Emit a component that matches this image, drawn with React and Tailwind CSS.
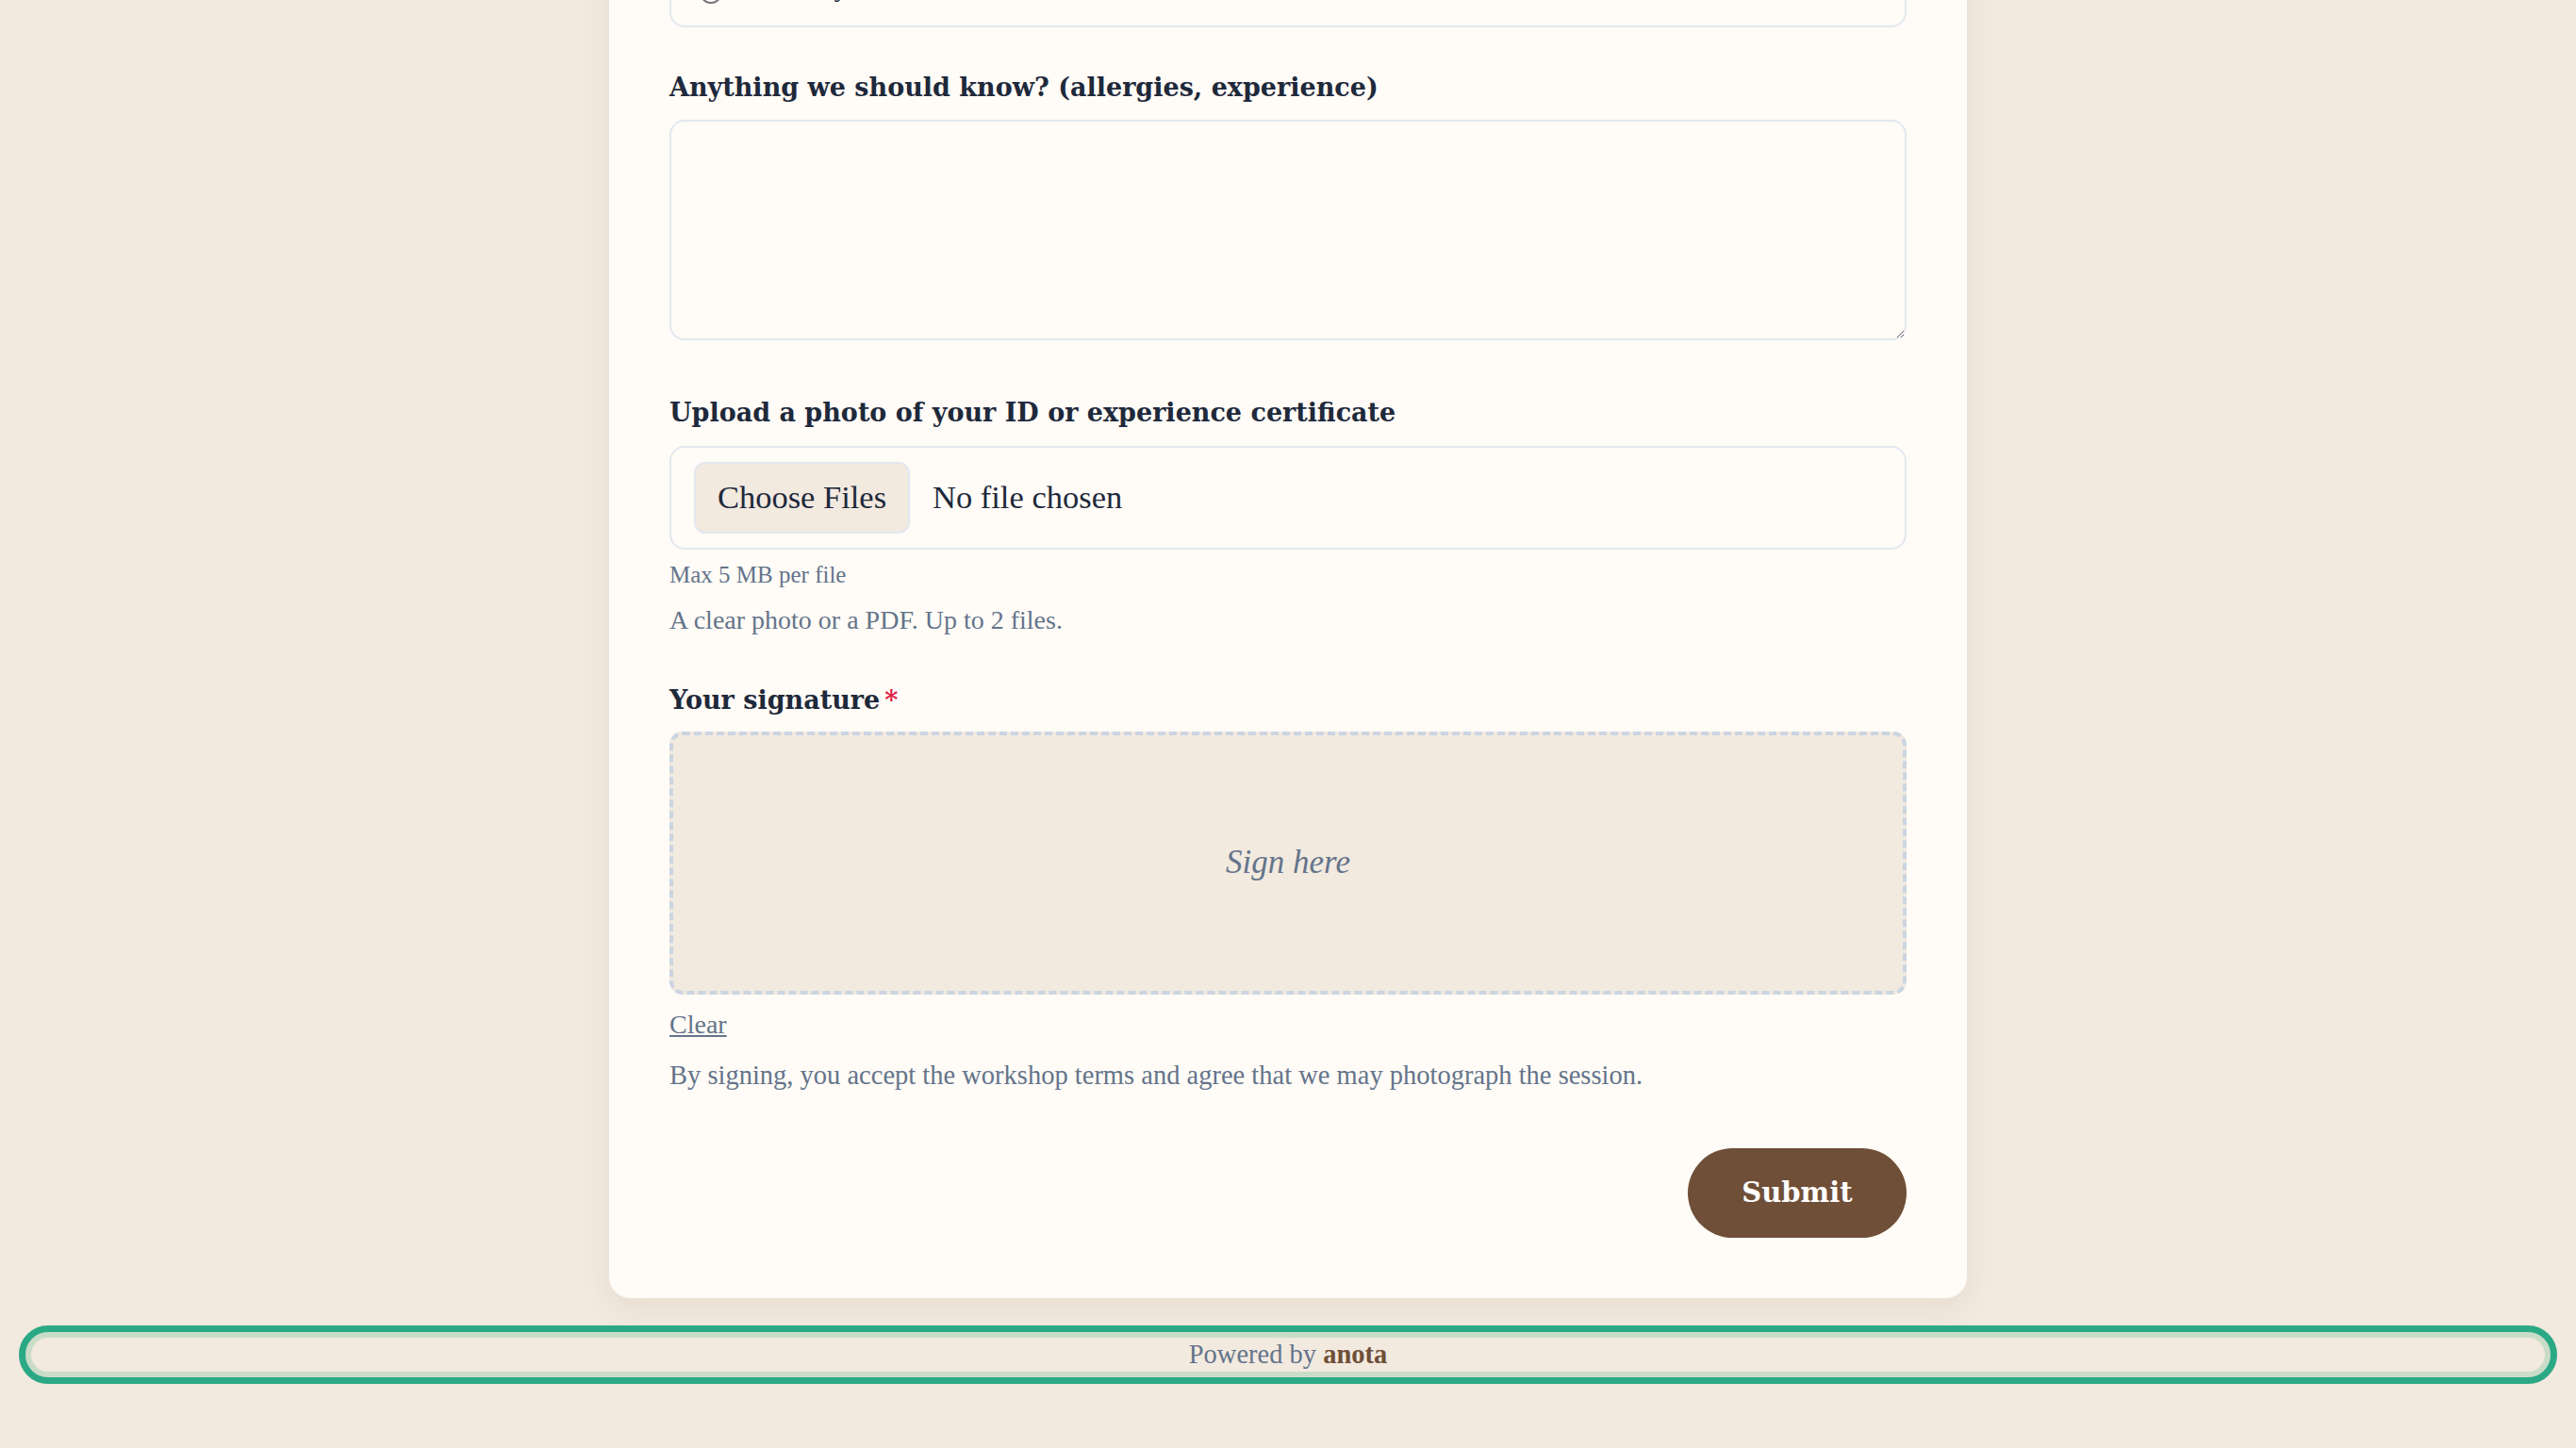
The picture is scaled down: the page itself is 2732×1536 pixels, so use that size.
import React from 'react';

const serif = "font-['Liberation_Serif',serif]";
const bold = "font-['DejaVu_Serif',serif] font-bold";

const Label = ({ children, required, className = '' }) => (
  <div className={`${bold} text-[27px] leading-[40px] text-[#1e293b] ${className}`}>
    {children}
    {required && <span className="ml-[5px] text-[#e11d48]">*</span>}
  </div>
);

const Radio = ({ text }) => (
  <div className="flex h-[36px] items-start gap-[20px]">
    <span className="mt-[6px] h-[24px] w-[24px] shrink-0 rounded-full border-2 border-[#767676] bg-white" />
    <span className={`${serif} text-[28px] leading-[26px] text-[#1e293b]`}>{text}</span>
  </div>
);

export default function App() {
  return (
    <div className={`min-h-screen overflow-hidden bg-[#f2e9df] ${serif}`}>
      <div className="mx-auto mt-[-161px] w-[1440px] rounded-[22px] bg-[#fffbf6] px-[64px] pb-[64px] pt-[64px] shadow-[0_10px_30px_rgba(111,79,56,0.08)]">
        {/* previous question, scrolled mostly out of view */}
        <div className="flex flex-col gap-[16px] rounded-[16px] border-2 border-[#e2e8f0] px-[30px] py-[17px]">
          <Radio text="Yes, a few times" />
          <Radio text="Not really, this is new to me" />
        </div>

        <Label className="mt-[44px]">Anything we should know? (allergies, experience)</Label>
        <textarea className="mt-[14px] block h-[234px] w-full rounded-[16px] border-2 border-[#e2e8f0] bg-[#fffbf6] px-[24px] py-[16px] text-[28px] outline-none" />

        <Label className="mt-[57px]">Upload a photo of your ID or experience certificate</Label>
        <div className="mt-[15px] flex items-center gap-[24px] rounded-[16px] border-2 border-[#e2e8f0] px-[24px] py-[15px]">
          <button className="h-[76px] w-[229px] rounded-[12px] border-2 border-[#e2e8f0] bg-[#f2e9df] text-[34.5px] text-[#1e293b]">
            Choose Files
          </button>
          <span className="text-[34.5px] text-[#1e293b]">No file chosen</span>
        </div>
        <div className="mt-[11px] text-[25px] leading-[32px] text-[#64748b]">Max 5 MB per file</div>
        <div className="mt-[14px] text-[28px] leading-[36px] text-[#64748b]">A clear photo or a PDF. Up to 2 files.</div>

        <Label required className="mt-[47px]">Your signature</Label>
        <div className="mt-[13px] flex h-[279px] items-center justify-center rounded-[14px] border-4 border-dashed border-[#cbd5e1] bg-[#f2e9df]">
          <span className="text-[35px] italic text-[#64748b]">Sign here</span>
        </div>
        <div className="mt-[14px] text-[28px] leading-[36px]">
          <a href="#" className="text-[#64748b] underline">Clear</a>
        </div>
        <p className="mt-[18px] text-[28.5px] leading-[36px] text-[#64748b]">
          By signing, you accept the workshop terms and agree that we may photograph the session.
        </p>

        <div className="mt-[59px] flex justify-end">
          <button className={`${bold} h-[95px] w-[232px] rounded-full bg-[#6f4f38] text-[29px] text-white`}>
            Submit
          </button>
        </div>
      </div>

      <footer className="mx-[20px] mt-[29px] flex h-[62px] items-center justify-center rounded-full border-[7px] border-[#2ba985] shadow-[inset_0_0_0_6px_#c9dcc8]">
        <span className="text-[28.5px] text-[#64748b]">
          Powered by <b className="text-[#6f4f38]">anota</b>
        </span>
      </footer>
    </div>
  );
}
